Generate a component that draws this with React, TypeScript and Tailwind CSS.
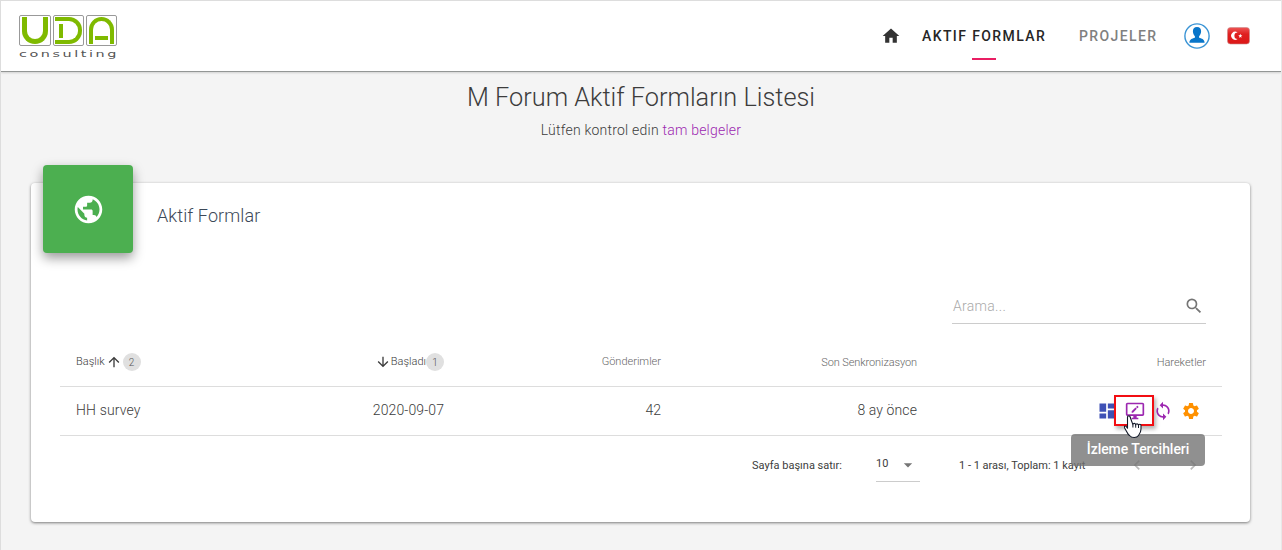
import { MdHome, MdPublic, MdSearch, MdArrowUpward, MdArrowDownward, MdDashboard, MdSync, MdSettings, MdArrowDropDown, MdChevronLeft, MdChevronRight } from "react-icons/md";

function Logo() {
  return (
    <div className="w-[98px] pt-[14px]" aria-label="UDA consulting">
      <div className="flex gap-[2px]">
        <div className="h-[31px] w-[32px] rounded-[2px] border border-[#999] px-[2px] pt-px">
          <div className="h-[27px] rounded-b-[13px] border-[5px] border-t-0 border-[#7fba00]" />
        </div>
        <div className="flex h-[31px] w-[31px] rounded-[2px] border border-[#999] px-px pt-px">
          <div className="flex h-[27px] w-full items-end rounded-r-[13px] border-[4px] border-l-0 border-[#7fba00] pb-[2px] pl-[4px]">
            <div className="h-[14px] w-[4px] bg-[#7fba00]" />
          </div>
        </div>
        <div className="h-[31px] w-[31px] rounded-[2px] border border-[#999] px-[2px] pt-px">
          <div className="flex h-[27px] items-end rounded-t-[13px] border-[4px] border-b-0 border-[#7fba00] px-[2px] pb-[4px]">
            <div className="h-[4px] w-full bg-[#7fba00]" />
          </div>
        </div>
      </div>
      <div className="mt-[3px] h-3 w-[60px] origin-left scale-x-[1.6] text-[9px] leading-[10px] font-normal tracking-[1.600px] text-[#555] [font-family:'DejaVu_Sans',sans-serif]">consulting</div>
    </div>
  );
}

function MonitorEdit() {
  return (
    <svg className="relative size-5" viewBox="0 0 24 24" fill="currentColor">
      <path d="M21 2H3C1.900 2 1 2.900 1 4v12c0 1.100.9 2 2 2h7v2H8v2h8v-2h-2v-2h7c1.100 0 2-.9 2-2V4c0-1.100-.9-2-2-2zm0 14H3V4h18v12z" />
      <path d="M8 12.400V14h1.600l4.600-4.600-1.600-1.600L8 12.400zm8.100-4.900c.2-.2.200-.5 0-.7l-.9-.9c-.2-.2-.5-.2-.7 0l-1.300 1.300 1.600 1.600 1.300-1.300z" />
    </svg>
  );
}

function Header() {
  return (
    <header className="flex h-[72px] border-t border-b border-t-[#ddd] border-b-[#939695] bg-white pl-[18px] shadow-[0_1px_2px_rgba(0,0,0,0.15)]">
      <Logo />
      <nav className="ml-auto flex h-[70px] items-center pr-[31px] text-[14px] font-medium tracking-[1.400px]">
        <MdHome className="mr-[21px] size-5 text-[#333]" />
        <div className="relative mr-[33px] w-[124px] whitespace-nowrap text-[#262626]">
          AKTIF FORMLAR
          <span className="absolute -bottom-[13px] left-[50px] h-[2px] w-6 bg-[#e91e63]" />
        </div>
        <div className="mr-[26px] w-[79px] whitespace-nowrap text-[#808080]">PROJELER</div>
        <svg className="mr-[17px] size-[26px]" viewBox="0 0 26 26">
          <circle cx="13" cy="13" r="12.100" fill="none" stroke="#3a94d5" strokeWidth="1.400" />
          <path d="M13 4c-2.800 0-4.300 1.900-4.100 4.600.2 2.200.9 3.700 2 4.700v1.400c-2.800.9-5.500 1.600-5.500 5.100h15.200c0-3.500-2.700-4.200-5.500-5.100v-1.400c1.100-1 1.800-2.500 2-4.700C17.300 5.900 15.800 4 13 4z" fill="#0875c9" />
        </svg>
        <svg className="h-[18px] w-[23px]" viewBox="0 0 23 18">
          <defs><linearGradient id="flag" x2="0" y2="1"><stop stopColor="#e55" /><stop offset=".4" stopColor="#df2020" /><stop offset="1" stopColor="#dc1717" /></linearGradient></defs>
          <rect x=".5" y=".5" width="22" height="16.500" rx="3" fill="url(#flag)" stroke="#c98b8b" strokeWidth=".6" />
          <path d="M10.600 5.600a4 4 0 1 0 0 6.400 3.200 3.200 0 1 1 0-6.400z" fill="#fff" />
          <path d="m13.300 6.800.6 1.400 1.500.1-1.200.9.4 1.500-1.300-.8-1.300.8.4-1.500-1.200-.9 1.500-.1z" fill="#fff" />
        </svg>
      </nav>
    </header>
  );
}

function Badge({ value }: { value: string }) {
  return <span className="flex size-[18px] items-center justify-center rounded-full bg-[#e0e0e0] text-[10px] text-[#555]">{value}</span>;
}

function Actions() {
  return (
    <div className="relative flex h-full items-center justify-end gap-2 pr-[5px] pb-px">
      <MdDashboard className="size-5 text-[#3f51b5]" />
      <div className="absolute top-[8px] right-[52px] h-[31px] w-[40px] border-2 border-[#f20d12] bg-white shadow-[2px_3px_4px_rgba(0,0,0,0.3)]" />
      <MonitorEdit />
      <MdSync className="relative size-5" />
      <MdSettings className="size-5 text-[#ff9100]" />
      <div className="absolute top-[47px] right-[1px] flex h-8 w-[134px] items-center justify-center rounded-[4px] bg-[#747474]/80 pb-px text-[14px] font-medium tracking-[-0.050px] whitespace-nowrap text-white">İzleme Tercihleri</div>
      <svg className="absolute top-[28px] right-[64px] h-[24px] w-[18px]" viewBox="0 0 18 24">
        <path d="M6.200 2.200c0-1.800-2.700-1.800-2.700 0v11L2.200 11.500C1.200 10.300-.4 11.500.6 13l3 5.200c.4.900 1.100 1.600 1.900 2.300 2.600 2.800 7.200 2.700 9 0 1.500-1.900 2.500-4 2.500-6.500v-3.500c0-1.500-2.300-1.700-2.500 0 0-2-2.600-2.200-2.800-.5 0-2-2.700-2.200-2.800-.4z" fill="#fff" stroke="#111827" strokeWidth="1.100" strokeLinejoin="round" />
        <path d="M8.900 9.500v3M11.700 10v2.700M14.500 10.500v2.500" stroke="#111827" />
      </svg>
    </div>
  );
}

export default function App() {
  return (
    <div className="h-[550px] w-[1282px] overflow-hidden border-x border-l-[#ddd] border-r-[#e8e8e8] bg-[#f4f4f4] font-light text-[#3c3c3c] [font-family:Roboto,sans-serif]">
      <Header />
      <main className="px-[30px]">
        <div className="h-[111px] pt-[8px] text-center">
          <h1 className="text-[25.300px] leading-[36px] font-light">M Forum Aktif Formların Listesi</h1>
          <p className="mt-[4px] text-[14px] leading-5 tracking-[0.220px]">Lütfen kontrol edin <span className="text-[#9c27b0]">tam belgeler</span></p>
        </div>
        <section className="mr-px flex h-[339px] flex-col rounded-[4px] bg-white shadow-[0_1px_3px_rgba(0,0,0,0.5)]">
          <div className="flex h-[70px] pl-[12px]">
            <div className="-mt-[18px] flex h-[88px] w-[90px] shrink-0 items-center justify-center rounded-[4px] bg-[#4caf50] text-white shadow-[0_5px_12px_rgba(0,0,0,0.4)]"><MdPublic className="size-[33px]" /></div>
            <h2 className="mt-[20px] ml-6 text-[18px] leading-[26px] tracking-[0.100px] text-[#3c4858]">Aktif Formlar</h2>
          </div>
          <div className="mt-[36px] mr-[44px] ml-auto flex h-[35px] w-[254px] items-center justify-between border-b border-[#ccc] pr-[2px] pl-px text-[14px] tracking-[0.300px] text-[#aaa]">Arama...<MdSearch className="size-5 text-[#757575]" /></div>
          <div className="mt-[14px] mr-[28px] ml-[29px] grid h-[49px] grid-cols-[200px_200px_217px_256px_289px] items-center border-b border-[#ddd] text-[11px] [&>div]:px-4">
            <div className="flex items-center"><span className="pt-px">Başlık</span><MdArrowUpward className="mr-px ml-px size-4" /><Badge value="2" /></div>
            <div className="flex items-center justify-end"><MdArrowDownward className="size-4" /><span className="pt-px">Başladı</span><Badge value="1" /></div>
            <div className="text-right text-[#666]">Gönderimler</div>
            <div className="pt-[2px] text-right tracking-[-0.100px] text-[#666]">Son Senkronizasyon</div>
            <div className="pt-[2px] text-right text-[#666]">Hareketler</div>
          </div>
          <div className="mr-[28px] ml-[29px] grid h-[49px] grid-cols-[200px_200px_217px_256px_289px] items-center border-b border-[#ddd] text-[14px] [&>div]:px-4">
            <div className="pb-[2px] tracking-[0.150px]">HH survey</div>
            <div className="pb-[2px] text-right tracking-[0.100px]">2020-09-07</div>
            <div className="pb-[2px] text-right">42</div>
            <div className="pb-[2px] text-right tracking-[0.100px]">8 ay önce</div>
            <div className="h-full text-[#9c27b0]"><Actions /></div>
          </div>
          <div className="flex h-[58px] items-center pl-[721px] text-[11px] font-normal">
            <span className="w-[124px] pt-[2px] whitespace-nowrap">Sayfa başına satır:</span>
            <div className="-mt-px flex h-[34px] w-[44px] items-center justify-between border-b border-[#ccc] pt-px">10<MdArrowDropDown className="mr-[2px] size-5 text-[#757575]" /></div>
            <span className="ml-[39px] w-[168px] pt-[2px] whitespace-nowrap">1 - 1 arası, Toplam: 1 kayıt</span>
            <MdChevronLeft className="size-5 text-[#bbb]" />
            <MdChevronRight className="ml-9 size-5 text-[#bbb]" />
          </div>
        </section>
      </main>
    </div>
  );
}
